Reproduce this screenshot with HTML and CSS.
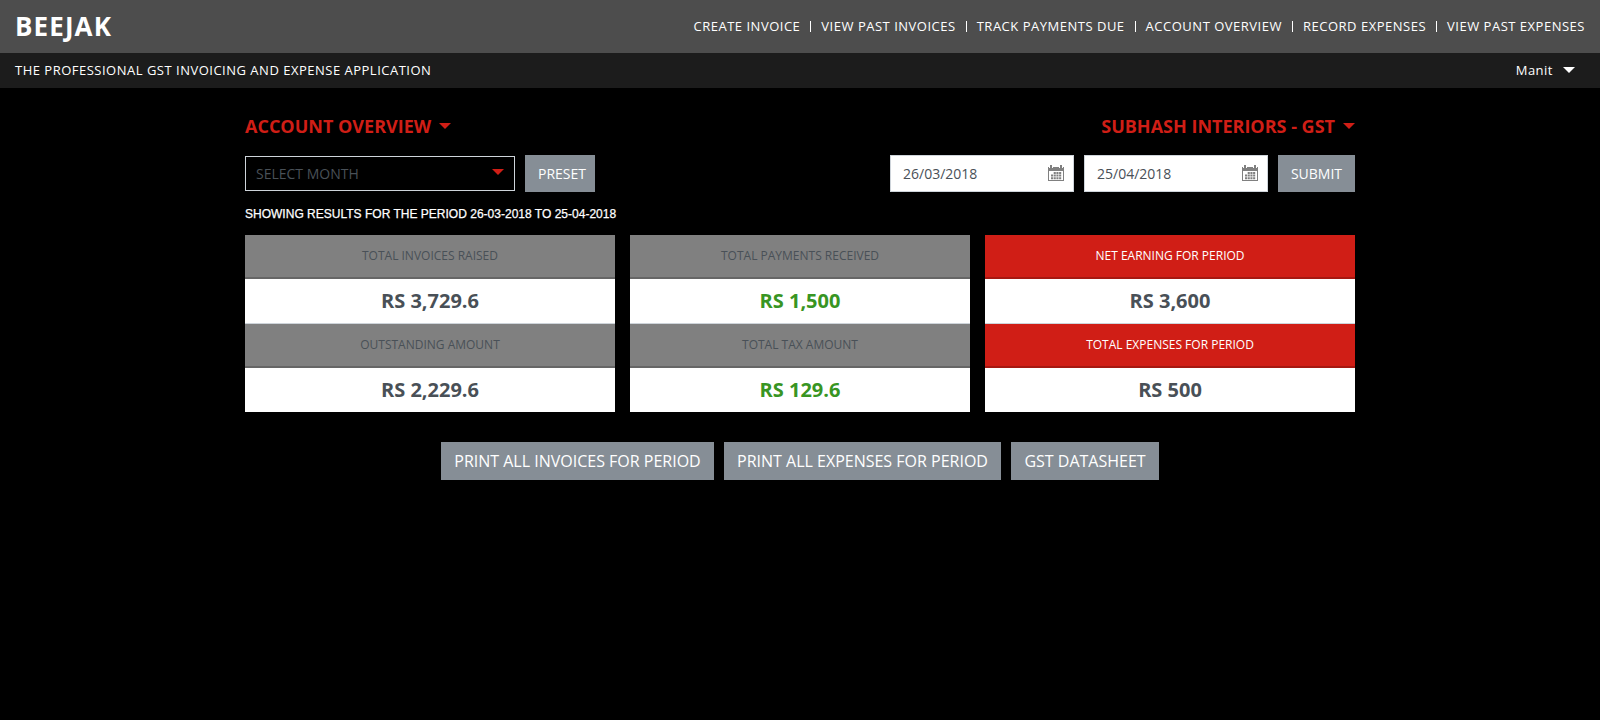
FILE: index.html
```html
<!DOCTYPE html>
<html lang="en">
<head>
<meta charset="utf-8">
<title>Beejak</title>
<link rel="stylesheet" href="styles.css">
</head>
<body>
<svg width="0" height="0" class="defs">
  <symbol id="calendar" viewBox="0 0 16 16">
    <path fill="#808080" d="M0 2h16v14H0z"/>
    <path fill="#fff" d="M1 6h14v9H1zM1 2h1v2h2V2h1v1H1zM11 2h1v2h2V2h1v1h-4z"/>
    <path fill="#808080" d="M2 0h2v4H2zM12 0h2v4h-2z"/>
    <path fill="#808080" d="M5.7 7h2.1v2H5.7zM8.4 7h2.1v2H8.4zM11.1 7h2.1v2h-2.1zM3 9.6h2.1v2H3zM5.7 9.6h2.1v2H5.7zM8.4 9.6h2.1v2H8.4zM11.1 9.6h2.1v2h-2.1zM3 12.2h2.1v2H3zM5.7 12.2h2.1v2H5.7zM8.4 12.2h2.1v2H8.4zM11.1 12.2h2.1v2h-2.1z"/>
  </symbol>
</svg>
<header class="topbar">
  <a class="brand">BEEJAK</a>
  <nav class="nav">
    <a>CREATE INVOICE</a><a>VIEW PAST INVOICES</a><a>TRACK PAYMENTS DUE</a><a>ACCOUNT OVERVIEW</a><a>RECORD EXPENSES</a><a>VIEW PAST EXPENSES</a>
  </nav>
</header>
<div class="subbar">
  <span>THE PROFESSIONAL GST INVOICING AND EXPENSE APPLICATION</span>
  <span class="user">Manit<i class="caret"></i></span>
</div>
<main class="container">
  <div class="row titles">
    <h1 class="title">ACCOUNT OVERVIEW<i class="caret"></i></h1>
    <h1 class="title">SUBHASH INTERIORS - GST<i class="caret"></i></h1>
  </div>
  <div class="row controls">
    <div class="group">
      <div class="select">SELECT MONTH<i class="caret"></i></div>
      <button class="btn preset">PRESET</button>
    </div>
    <div class="group">
      <div class="date">26/03/2018<svg class="cal"><use href="#calendar"/></svg></div>
      <div class="date">25/04/2018<svg class="cal"><use href="#calendar"/></svg></div>
      <button class="btn submit">SUBMIT</button>
    </div>
  </div>
  <p class="period">SHOWING RESULTS FOR THE PERIOD 26-03-2018 TO 25-04-2018</p>
  <div class="cards">
    <section class="card">
      <h2>TOTAL INVOICES RAISED</h2><p>RS 3,729.6</p>
      <h2>OUTSTANDING AMOUNT</h2><p>RS 2,229.6</p>
    </section>
    <section class="card green">
      <h2>TOTAL PAYMENTS RECEIVED</h2><p>RS 1,500</p>
      <h2>TOTAL TAX AMOUNT</h2><p>RS 129.6</p>
    </section>
    <section class="card red">
      <h2>NET EARNING FOR PERIOD</h2><p>RS 3,600</p>
      <h2>TOTAL EXPENSES FOR PERIOD</h2><p>RS 500</p>
    </section>
  </div>
  <div class="actions">
    <button class="action invoices">PRINT ALL INVOICES FOR PERIOD</button>
    <button class="action expenses">PRINT ALL EXPENSES FOR PERIOD</button>
    <button class="action sheet">GST DATASHEET</button>
  </div>
</main>
</body>
</html>
```
FILE: styles.css
```css
* { box-sizing: border-box; margin: 0; padding: 0; }
body { background: #000; font-family: "Open Sans", sans-serif; color: #fff; overflow: hidden; }
.defs { display: block; }
.topbar { height: 53px; background: #4d4d4d; display: flex; justify-content: space-between; align-items: center; padding: 0 15px; }
.brand { font-size: 26px; font-weight: 700; line-height: 53px; letter-spacing: 1.1px; }
.nav { display: flex; font-size: 13px; letter-spacing: .51px; line-height: 11px; }
.nav a + a { border-left: 1px solid #fff; padding-left: 10px; margin-left: 10px; }
.subbar { height: 35px; background: #1c1c1c; display: flex; justify-content: space-between; align-items: center; padding: 0 25px 2px 15px; font-size: 13px; letter-spacing: .5px; }
.caret { display: inline-block; border: 6px solid transparent; border-top-color: currentColor; border-bottom: 0; }
.user { display: flex; align-items: center; gap: 10px; }
.container { width: 1110px; margin: 0 auto; }
.row, .group { display: flex; justify-content: space-between; }
.group { gap: 10px; align-items: center; }
.titles { padding-top: 26px; }
.title { font-size: 18px; line-height: 25px; font-weight: 700; color: #d01e16; display: flex; align-items: center; gap: 8px; }
.title .caret { margin-bottom: 2px; }
.controls { margin-top: 16px; height: 37px; font-size: 14px; }
.select { width: 270px; height: 35px; border: 1px solid #ced4da; padding: 0 10px; color: #495057; display: flex; align-items: center; justify-content: space-between; }
.select .caret { color: #d01e16; margin-bottom: 4px; }
.btn, .action { border: 0; background: #868e96; color: #fff; font-family: inherit; }
.btn { height: 37px; font-size: 14px; }
.preset { width: 70px; padding-left: 4px; }
.submit { width: 77px; }
.date { width: 184px; height: 37px; background: #fff; border: 1px solid #ced4da; color: #495057; padding: 0 9px 0 12px; display: flex; align-items: center; justify-content: space-between; }
.cal { width: 16px; height: 16px; margin-bottom: 1px; }
.period { font: 12px/18px "Liberation Sans", Arial, sans-serif; letter-spacing: .01px; -webkit-text-stroke: .25px #fff; margin-top: 13px; }
.cards { display: grid; grid-template-columns: 370px 340px 370px; gap: 15px; margin-top: 12px; text-align: center; }
.card { background: #fff; color: #495057; }
.card h2 { height: 44px; line-height: 41px; background: #808080; border-bottom: 2px solid #666; font-size: 12px; font-weight: 400; }
.card p { height: 44px; line-height: 44px; font-size: 20px; font-weight: 700; }
.card p:nth-of-type(1) { height: 45px; border-bottom: 1px solid #ced4da; }
.green p { color: #389523; }
.red h2 { background: #d01e16; border-color: #a61811; color: #fff; }
.actions { display: flex; justify-content: center; gap: 10px; margin-top: 30px; }
.action { height: 38px; font-size: 16px; }
.invoices { width: 273px; }
.expenses { width: 277px; }
.sheet { width: 148px; }
```
